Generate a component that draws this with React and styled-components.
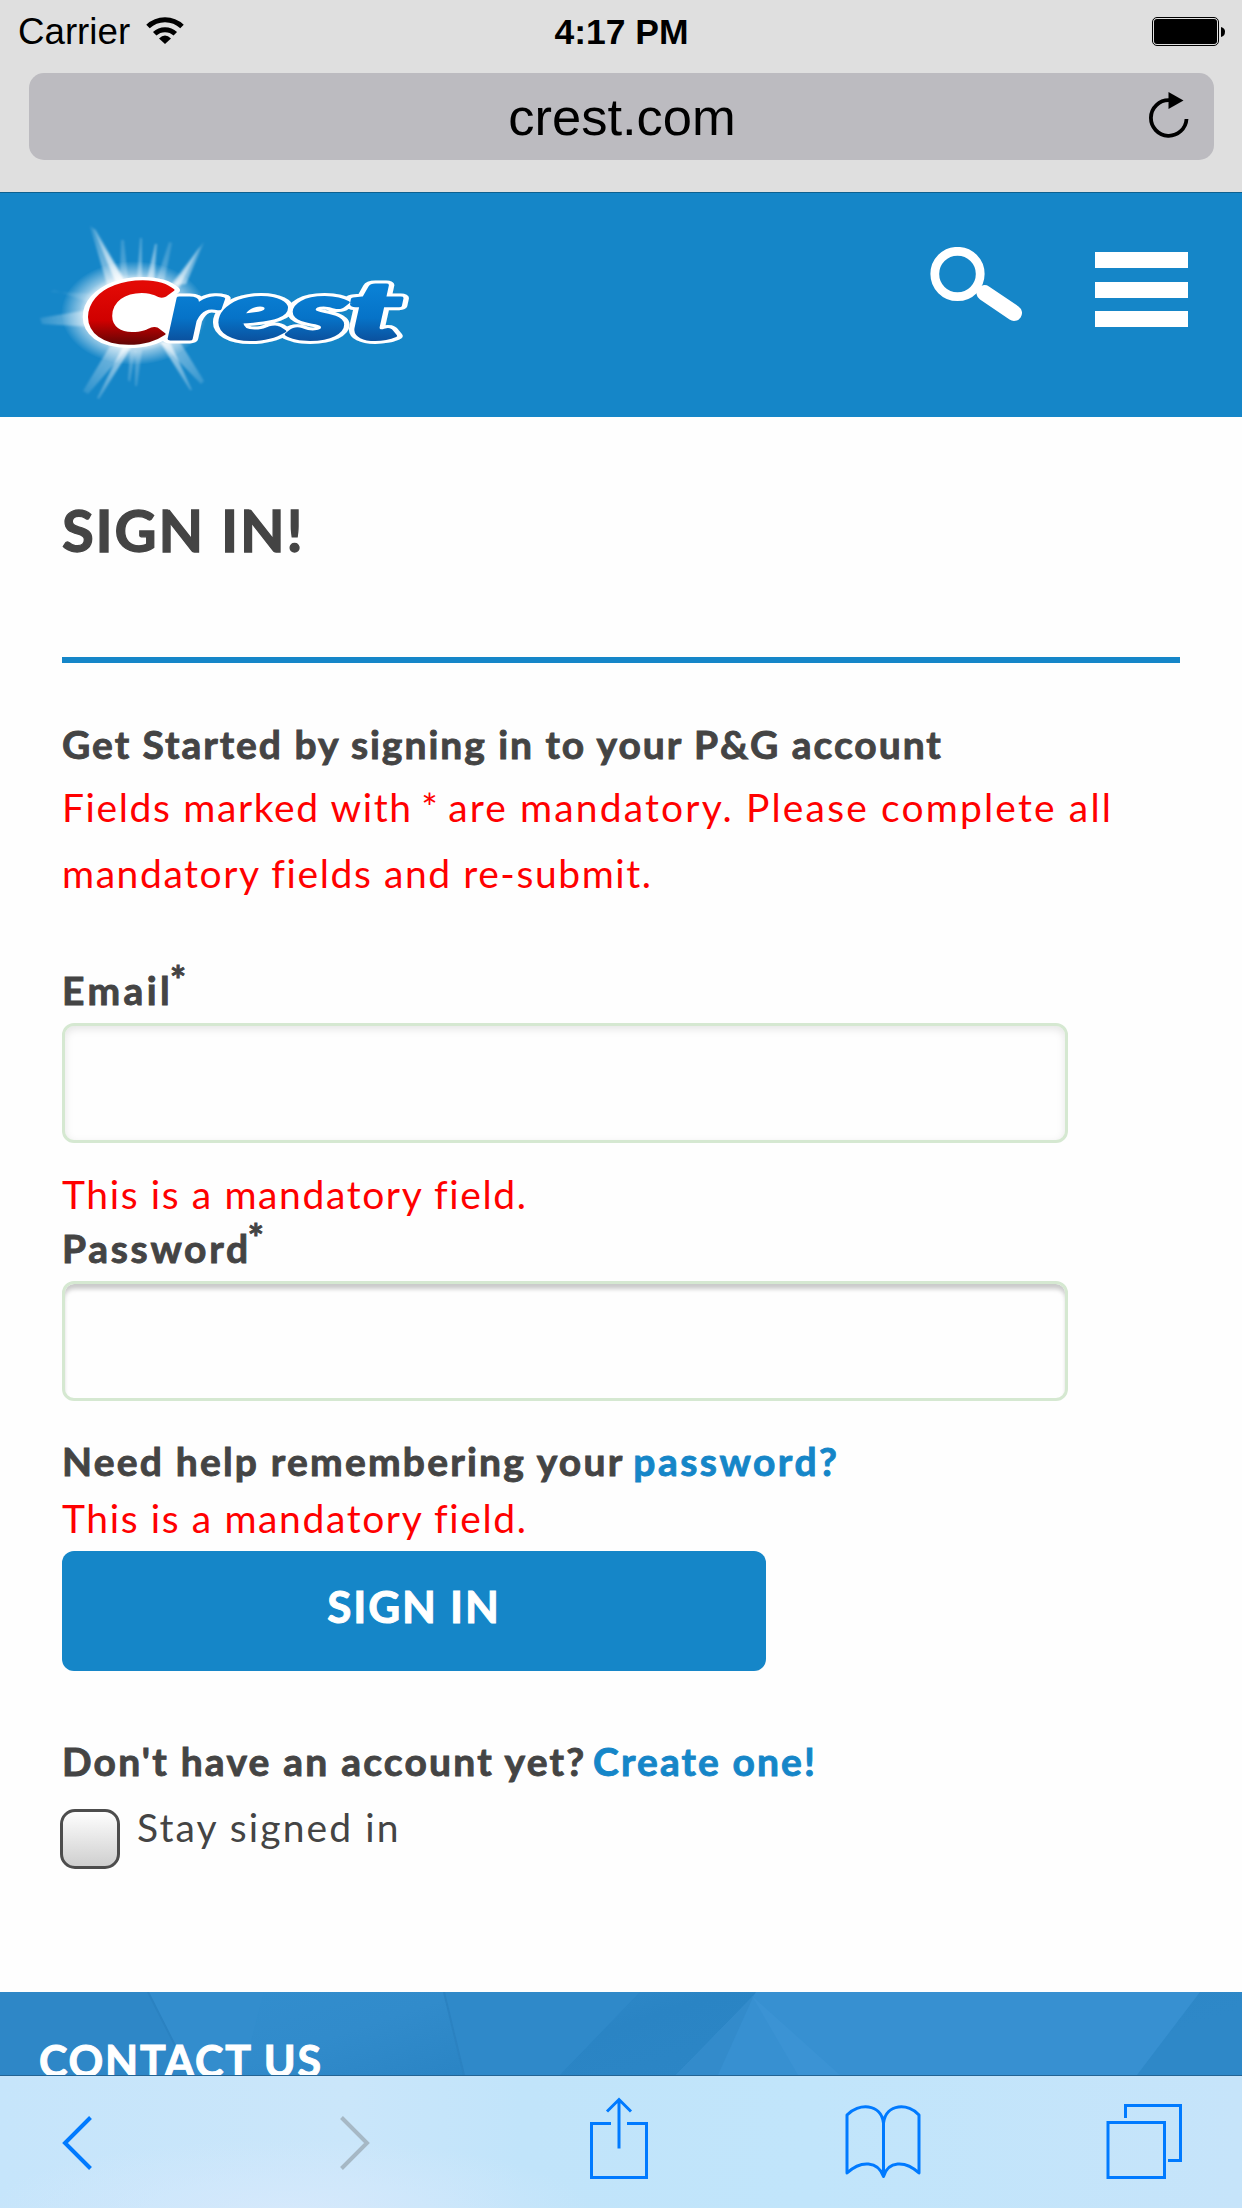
import React from "react";
import styled, { createGlobalStyle } from "styled-components";

const BLUE = "#1586c8";
const INK = "#444";
const IOS = "#007aff";
const BRAND_FONT = `Lato, "Open Sans", sans-serif`;
const SYSTEM_FONT = `"Liberation Sans", Arial, sans-serif`;

const GlobalStyle = createGlobalStyle`
  * { box-sizing: border-box; }
  html, body { margin: 0; background: #fefefe; }
  svg { display: block; flex: none; }
`;

const Screen = styled.div`
  width: 1242px;
  height: 2208px;
  display: flex;
  flex-direction: column;
  overflow: hidden;
  background: #fefefe;
  color: ${INK};
  font-family: ${BRAND_FONT};
`;

const BrowserTop = styled.div`
  height: 193px;
  flex: none;
  background: #dfdfdf;
  border-bottom: 1px solid #0d608f;
  font-family: ${SYSTEM_FONT};
  color: #000;
`;

const StatusBar = styled.div`
  height: 73px;
  padding: 0 17px 14px 18px;
  display: grid;
  grid-template-columns: 1fr auto 1fr;
  align-items: center;
  font-size: 36px;
  line-height: 60px;
`;

const Carrier = styled.div`
  display: flex;
  align-items: center;
  gap: 16px;
  padding-top: 2px;
  font-size: 36.7px;

  svg { margin-bottom: 4px; }
`;

const Clock = styled.div`
  font-weight: bold;
  font-size: 35.5px;
  padding-top: 2px;
`;

const BatteryHolder = styled.div`
  display: flex;
  justify-content: flex-end;
`;

const AddressBar = styled.div`
  height: 87px;
  margin: 0 28px 0 29px;
  padding: 0 25px 0 26px;
  border-radius: 15px;
  background: #bcbbc0;
  display: grid;
  grid-template-columns: 40px 1fr 40px;
  align-items: center;
  font-size: 52.5px;
  line-height: 86px;
  text-align: center;

  svg { margin-bottom: 3px; }
`;

const SiteHeader = styled.header`
  height: 224px;
  flex: none;
  background: ${BLUE};
  display: flex;
  align-items: flex-start;
  padding-left: 20px;
  padding-right: 54px;
`;

const HeaderActions = styled.div`
  margin-left: auto;
  padding-top: 54px;
  display: flex;
  gap: 72px;
`;

const MenuButton = styled.button`
  width: 93px;
  height: 75px;
  margin-top: 5px;
  padding: 0;
  border: 0;
  background: none;
  display: flex;
  flex-direction: column;
  justify-content: space-between;
`;

const MenuBar = styled.span`
  height: 16px;
  background: #fff;
`;

const Main = styled.main`
  height: 1575px;
  flex: none;
  padding: 78px 62px 0;
`;

const Title = styled.h1`
  margin: 0;
  height: 168px;
  font-size: 58px;
  line-height: 70px;
  letter-spacing: 1.8px;
  font-weight: 700;
  -webkit-text-stroke: 1.3px;
  border-bottom: 6px solid ${BLUE};
`;

const Line = styled.p`
  margin: ${(p) => p.$gap || 0}px 0 0;
  font-size: 39px;
  line-height: ${(p) => p.$leading || 46}px;
  font-weight: ${(p) => (p.$strong ? 700 : 400)};
  -webkit-text-stroke: ${(p) => (p.$strong ? 0.9 : 0)}px;
  letter-spacing: ${(p) => p.$track}px;
  color: ${(p) => (p.$error ? "#f00" : INK)};
  white-space: nowrap;
`;

const Anchor = styled.a`
  color: ${BLUE};
  text-decoration: none;
  letter-spacing: ${(p) => p.$track}px;
  margin-left: ${(p) => p.$shift || 0}px;
`;

const InlineStar = styled.span`
  margin: 0 -3px 0 -3px;
`;

const Tracked = styled.span`
  letter-spacing: 2.15px;
`;

const FieldLabel = styled.label`
  display: flex;
  align-items: flex-start;
  height: 46px;
  margin-top: ${(p) => p.$gap}px;
  font-size: 39px;
  line-height: 46px;
  font-weight: 700;
  -webkit-text-stroke: 0.9px;
  letter-spacing: ${(p) => p.$track}px;
`;

const Star = styled.sup`
  font-size: 38px;
  line-height: 46px;
  letter-spacing: 0;
  margin-top: -11px;
  margin-left: -3px;
`;

const Field = styled.input`
  display: block;
  width: 1006px;
  height: 120px;
  margin-top: 10px;
  padding: 0 24px;
  border: 3px solid #d5e8d1;
  border-radius: 12px;
  background: #fefefe;
  outline: 0;
  font: 39px ${BRAND_FONT};
  box-shadow: ${(p) =>
    p.$deep ? "inset 0 6px 4px -1px #cbcbcb" : "inset 0 3px 9px rgba(0, 0, 0, 0.1)"};
`;

const SubmitButton = styled.button`
  display: block;
  width: 704px;
  height: 120px;
  margin-top: 10px;
  padding: 0 0 9px;
  border: 0;
  border-radius: 12px;
  background: ${BLUE};
  color: #fff;
  font: 700 44px/53px ${BRAND_FONT};
  -webkit-text-stroke: 1px;
  letter-spacing: 1.8px;
`;

const StayRow = styled.label`
  display: flex;
  align-items: flex-start;
  gap: 17px;
  margin: 20px 0 0 -2px;
`;

const Checkbox = styled.span`
  width: 60px;
  height: 60px;
  margin-top: 5px;
  border: 3px solid #4d4d4d;
  border-radius: 15px;
  background: linear-gradient(#fefefe, #cfcfcf);
`;

const SiteFooter = styled.footer`
  height: 83px;
  flex: none;
  overflow: hidden;
  display: grid;
  background: #2e88c8;
  & > * { grid-area: 1 / 1; }
`;

const FooterTitle = styled.h2`
  margin: 41px 0 0 39px;
  color: #fff;
  font-size: 43px;
  line-height: 56px;
  height: 56px;
  font-weight: 700;
  -webkit-text-stroke: 1px;
  letter-spacing: 1.75px;
  z-index: 1;
`;

const Toolbar = styled.nav`
  height: 133px;
  flex: none;
  padding: 15px 0 0 60px;
  border-top: 1px solid #246494;
  background:
    radial-gradient(ellipse 300px 70px at 290px 133px, rgba(214, 233, 252, 0.9), transparent),
    linear-gradient(90deg, #c6e5fb, #cae6fa 28%, #c1e4fa 42%, #c1e5fb 65%, #c6e4fa);
  display: flex;
  color: ${IOS};
`;

const ToolItem = styled.div`
  margin-left: ${(p) => p.$space || 0}px;
`;

const WifiIcon = () => (
  <svg width="38" height="28" viewBox="0 0 38 28" fill="none" stroke="#000" strokeWidth="5">
    <path d="M2 10.500 A24.500 24.500 0 0 1 36 10.500" />
    <path d="M8.700 17.800 A15 15 0 0 1 29.300 17.800" />
    <path d="M13 22.500 Q19 16.500 25 22.500 L19 28 Z" fill="#000" stroke="none" />
  </svg>
);

const BatteryIcon = () => (
  <svg width="73" height="29" viewBox="0 0 73 29">
    <rect x="0.5" y="0.5" width="66" height="28" rx="4.5" fill="none" stroke="#000" />
    <rect x="2" y="2" width="63" height="25" rx="3" />
    <path d="M69 10 Q73 11 73 14.500 Q73 19 69 20 Z" />
  </svg>
);

const ReloadIcon = () => (
  <svg width="40" height="46" viewBox="0 0 40 46">
    <path d="M37.500 27 A17.800 17.800 0 1 1 20 8.200" fill="none" stroke="#000" strokeWidth="3.8" />
    <path d="M19.500 0 L34.500 8.500 L19.500 17 Z" />
  </svg>
);

const SearchIcon = () => (
  <svg width="93" height="76" viewBox="0 0 93 76" fill="none" stroke="#fff">
    <circle cx="27.500" cy="27" r="22.700" strokeWidth="8.800" />
    <path d="M54.500 46 L84 66" strokeWidth="16" strokeLinecap="round" />
  </svg>
);

const rays = [
  { pts: "70,26 76,30 106,82 88,88", o: 0.6 },
  { pts: "73,28 75,30 106,85 98,88", o: 0.85 },
  { pts: "184,42 179,48 150,86 166,84", o: 0.65 },
  { pts: "180,47 178,49 152,88 159,88", o: 0.7 },
  { pts: "101,40 104,40 108,80 100,82", o: 0.3 },
  { pts: "120,38 122,38 122,80 117,80", o: 0.4 },
  { pts: "135,44 137,44 134,80 127,80", o: 0.6 },
  { pts: "149,42 152,43 144,82 136,82", o: 0.3 },
  { pts: "20,118 22,124 90,128 80,108", o: 0.6 },
  { pts: "30,92 34,90 80,106 86,94", o: 0.2 },
  { pts: "63,191 68,194 110,146 90,146", o: 0.5 },
  { pts: "77,198 79,199 112,146 103,146", o: 0.7 },
  { pts: "108,180 110,182 116,150 110,150", o: 0.3 },
  { pts: "115,186 117,186 122,150 115,150", o: 0.3 },
  { pts: "184,181 181,184 140,142 160,142", o: 0.5 },
  { pts: "172,190 170,190 140,142 150,142", o: 0.7 },
];

const CrestLogo = () => (
  <svg width="420" height="224" viewBox="0 -7 420 224" role="img" aria-label="Crest">
    <defs>
      <linearGradient id="red" x1="0" y1="0" x2="0" y2="1">
        <stop offset="0.25" stopColor="#e20a05" />
        <stop offset="0.6" stopColor="#d00000" />
        <stop offset="0.85" stopColor="#5c0505" />
      </linearGradient>
      <linearGradient id="wave" x1="0" y1="0" x2="0" y2="1">
        <stop offset="0.3" stopColor="#0a80d4" />
        <stop offset="0.6" stopColor="#0673c8" />
        <stop offset="0.85" stopColor="#0b4f9c" />
      </linearGradient>
      <radialGradient id="glow">
        <stop offset="0.58" stopColor="#fff" />
        <stop offset="0.75" stopColor="#fff" stopOpacity="0.5" />
        <stop offset="1" stopColor="#fff" stopOpacity="0" />
      </radialGradient>
      <radialGradient id="beam" gradientUnits="userSpaceOnUse" cx="122" cy="113" r="105">
        <stop offset="0.3" stopColor="#fff" />
        <stop offset="1" stopColor="#fff" stopOpacity="0.15" />
      </radialGradient>
      <filter id="soft" x="-20%" y="-20%" width="140%" height="140%">
        <feGaussianBlur stdDeviation="1.3" />
      </filter>
    </defs>
    <g fill="url(#beam)" filter="url(#soft)">
      {rays.map((r) => (
        <polygon key={r.pts} points={r.pts} opacity={r.o} />
      ))}
    </g>
    <ellipse cx="114" cy="113" rx="73" ry="52" fill="url(#glow)" />
    <g fontFamily={BRAND_FONT} fontWeight="900" fontStyle="italic" strokeLinejoin="round">
      <g fill="#fff" stroke="#fff">
        <text transform="translate(65 143) scale(1.62 1)" fontSize="84" strokeWidth="9">C</text>
        <text transform="translate(148 139) scale(1.58 1)" fontSize="80" strokeWidth="9" textLength="148" lengthAdjust="spacingAndGlyphs">rest</text>
        <ellipse cx="134" cy="113" rx="24" ry="18" />
      </g>
      <text transform="translate(148 139) scale(1.58 1)" fontSize="80" fill="url(#wave)" stroke="url(#wave)" strokeWidth="3" textLength="148" lengthAdjust="spacingAndGlyphs">rest</text>
      <text transform="translate(65 143) scale(1.62 1)" fontSize="84" fill="url(#red)" stroke="url(#red)" strokeWidth="2.500">C</text>
    </g>
  </svg>
);

const FooterFacets = () => (
  <svg width="1242" height="83" viewBox="0 0 1242 83">
    <defs>
      <linearGradient id="facet" x1="0" x2="1" y1="0" y2="0.2">
        <stop offset="0" stopColor="#2d86c6" />
        <stop offset="0.2" stopColor="#328dcd" />
        <stop offset="0.36" stopColor="#318bcb" />
        <stop offset="0.56" stopColor="#2a84c4" />
        <stop offset="1" stopColor="#2e88c8" />
      </linearGradient>
    </defs>
    <rect width="1242" height="83" fill="url(#facet)" />
    <polygon points="0,0 148,0 190,83 0,83" fill="#2e87c7" />
    <polygon points="148,0 264,0 242,83 190,83" fill="#338dcd" />
    <polygon points="444,0 640,0 560,83 464,83" fill="#2f89c9" />
    <path d="M148 0 L190 83 M444 0 L464 83" stroke="#2b82c1" strokeWidth="2" />
    <polygon points="754,3 676,83 1137,83 1200,0 756,0" fill="#3790d1" />
    <polygon points="754,3 676,83 718,83" fill="#338bcb" />
    <polygon points="752,4 798,83 840,83" fill="#3b93d4" />
  </svg>
);

const BackIcon = () => (
  <svg width="34" height="90" viewBox="0 0 34 90" fill="none" stroke="currentColor" strokeWidth="4">
    <path d="M30.500 26.500 L5 52 L30.500 77.500" />
  </svg>
);

const ForwardIcon = () => (
  <svg width="34" height="90" viewBox="0 0 34 90" fill="none" stroke="#a6b8c5" strokeWidth="4">
    <path d="M3.500 26.500 L29 52 L3.500 77.500" />
  </svg>
);

const ShareIcon = () => (
  <svg width="58" height="90" viewBox="0 0 58 90" fill="none" stroke="currentColor" strokeWidth="3">
    <path d="M21 32.500 H1.500 V86.500 H56.500 V32.500 H37 M29 57.500 V8.500 M17 20.500 L29 8.500 L41 20.500" />
  </svg>
);

const BookIcon = () => (
  <svg width="76" height="90" viewBox="0 0 76 90" fill="none" stroke="currentColor" strokeWidth="3" strokeLinejoin="round">
    <path d="M38.500 32 C36 12 13 12 2 24 V82 C16 69 33 70 38.500 85.500 C43 70 60 69 74 82 V24 C64 12 41 12 38.500 32 V85" />
  </svg>
);

const TabsIcon = () => (
  <svg width="76" height="90" viewBox="0 0 76 90" fill="none" stroke="currentColor" strokeWidth="3">
    <path d="M2 31.500 H58.500 V86.500 H2 Z M19.500 27 V14.500 H74.500 V69.500 H62" />
  </svg>
);

export default function App() {
  return (
    <Screen>
      <GlobalStyle />
      <BrowserTop>
        <StatusBar>
          <Carrier>
            <span>Carrier</span>
            <WifiIcon />
          </Carrier>
          <Clock>4:17 PM</Clock>
          <BatteryHolder>
            <BatteryIcon />
          </BatteryHolder>
        </StatusBar>
        <AddressBar>
          <span />
          <span>crest.com</span>
          <ReloadIcon />
        </AddressBar>
      </BrowserTop>

      <SiteHeader>
        <CrestLogo />
        <HeaderActions>
          <SearchIcon />
          <MenuButton aria-label="Menu">
            <MenuBar />
            <MenuBar />
            <MenuBar />
          </MenuButton>
        </HeaderActions>
      </SiteHeader>

      <Main>
        <Title>SIGN IN!</Title>
        <Line $strong $gap={58} $track={1.96}>
          Get Started by signing in to your P&amp;G account
        </Line>
        <Line $error $leading={66} $gap={7} $track={1.62}>
          Fields marked with <InlineStar>*</InlineStar>{" "}
          <Tracked>are mandatory. Please complete all</Tracked>
        </Line>
        <Line $error $leading={66} $track={1.58}>
          mandatory fields and re-submit.
        </Line>

        <FieldLabel $gap={61} $track={3.4}>
          Email<Star>*</Star>
        </FieldLabel>
        <Field type="email" />
        <Line $error $gap={28} $track={1.61}>
          This is a mandatory field.
        </Line>

        <FieldLabel $gap={8} $track={2.7}>
          Password<Star>*</Star>
        </FieldLabel>
        <Field type="password" $deep />
        <Line $strong $gap={37} $track={2.2}>
          Need help remembering your <Anchor $track={2.5} $shift={-2}>password?</Anchor>
        </Line>
        <Line $error $gap={11} $track={1.61}>
          This is a mandatory field.
        </Line>
        <SubmitButton>SIGN IN</SubmitButton>

        <Line $strong $gap={67} $track={2.2}>
          Don't have an account yet? <Anchor $track={2.1} $shift={-5}>Create one!</Anchor>
        </Line>
        <StayRow>
          <Checkbox />
          <Line as="span" $track={2.1}>
            Stay signed in
          </Line>
        </StayRow>
      </Main>

      <SiteFooter>
        <FooterFacets />
        <FooterTitle>CONTACT US</FooterTitle>
      </SiteFooter>

      <Toolbar>
        <BackIcon />
        <ToolItem $space={244}>
          <ForwardIcon />
        </ToolItem>
        <ToolItem $space={218}>
          <ShareIcon />
        </ToolItem>
        <ToolItem $space={197}>
          <BookIcon />
        </ToolItem>
        <ToolItem $space={185}>
          <TabsIcon />
        </ToolItem>
      </Toolbar>
    </Screen>
  );
}
